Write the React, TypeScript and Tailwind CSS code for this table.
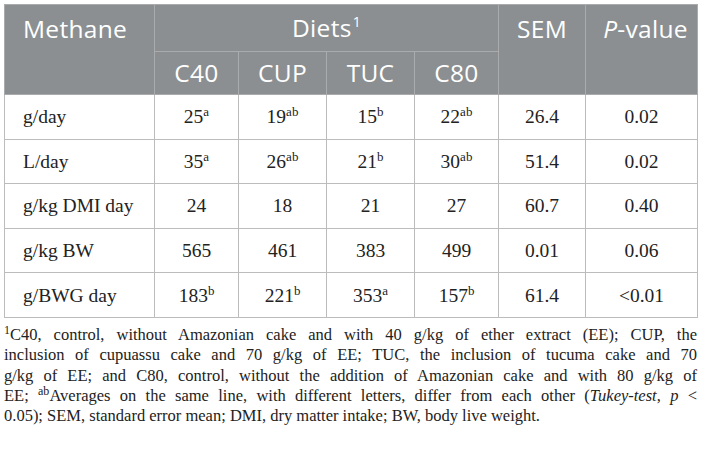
const rows: { label: string; vals: [string, string][]; sem: string; p: string }[] = [
  { label: "g/day", vals: [["25", "a"], ["19", "ab"], ["15", "b"], ["22", "ab"]], sem: "26.4", p: "0.02" },
  { label: "L/day", vals: [["35", "a"], ["26", "ab"], ["21", "b"], ["30", "ab"]], sem: "51.4", p: "0.02" },
  { label: "g/kg DMI day", vals: [["24", ""], ["18", ""], ["21", ""], ["27", ""]], sem: "60.7", p: "0.40" },
  { label: "g/kg BW", vals: [["565", ""], ["461", ""], ["383", ""], ["499", ""]], sem: "0.01", p: "0.06" },
  { label: "g/BWG day", vals: [["183", "b"], ["221", "b"], ["353", "a"], ["157", "b"]], sem: "61.4", p: "<0.01" },
];

const head = "font-['Open_Sans',sans-serif] text-white text-[24.5px] tracking-[0.3px] font-normal border border-[#a9abad]";
const cell = "border border-[#bcbcbc] text-center h-[44.6px] p-0";
const line = "block text-justify [text-align-last:justify]";

export default function App() {
  return (
    <div className="bg-white w-[702px] h-[459px] px-[4px] pt-[4px] text-[#222]">
      <table className="w-[693px] border-collapse table-fixed border border-[#bcbcbc]">
        <colgroup>
          <col className="w-[150px]" />
          <col className="w-[84px]" />
          <col className="w-[88px]" />
          <col className="w-[88px]" />
          <col className="w-[84px]" />
          <col className="w-[87px]" />
          <col className="w-[112px]" />
        </colgroup>
        <thead className="bg-[#8b8f92]">
          <tr className="h-[47px]">
            <th rowSpan={2} className={`${head} text-left align-top pl-[18px] pt-[6px]`}>Methane</th>
            <th colSpan={4} className={`${head} text-center`}>
              Diets<sup className="text-[14px] top-[-10px] ml-[1px]">1</sup>
            </th>
            <th rowSpan={2} className={`${head} text-center align-top pt-[6px]`}>SEM</th>
            <th rowSpan={2} className={`${head} text-center align-top pt-[6px] pl-[8px]`}>
              <i>P</i>-value
            </th>
          </tr>
          <tr className="h-[43px]">
            {["C40", "CUP", "TUC", "C80"].map((d) => (
              <th key={d} className={`${head} text-center`}>{d}</th>
            ))}
          </tr>
        </thead>
        <tbody className="font-['Liberation_Serif',serif] text-[19.5px]">
          {rows.map((r) => (
            <tr key={r.label}>
              <td className={`${cell} text-left pl-[18px]`}>{r.label}</td>
              {r.vals.map(([v, s], i) => (
                <td key={i} className={cell}>
                  {v}
                  {s && <sup className="text-[13px] top-[-7px]">{s}</sup>}
                </td>
              ))}
              <td className={cell}>{r.sem}</td>
              <td className={cell}>{r.p}</td>
            </tr>
          ))}
        </tbody>
      </table>
      <div className="mt-[7px] w-[693px] font-['Liberation_Serif',serif] text-[16.5px] leading-[20.3px]">
        <span className={line}>
          <sup className="text-[12px] top-[-6px]">1</sup>C40, control, without Amazonian cake and with 40 g/kg of ether extract (EE); CUP, the
        </span>
        <span className={line}>inclusion of cupuassu cake and 70 g/kg of EE; TUC, the inclusion of tucuma cake and 70</span>
        <span className={line}>g/kg of EE; and C80, control, without the addition of Amazonian cake and with 80 g/kg of</span>
        <span className={line}>
          EE; <sup className="text-[12px] top-[-6px]">ab</sup>Averages on the same line, with different letters, differ from each other (<i>Tukey-test</i>, <i>p</i> &lt;
        </span>
        <span className="block">0.05); SEM, standard error mean; DMI, dry matter intake; BW, body live weight.</span>
      </div>
    </div>
  );
}
